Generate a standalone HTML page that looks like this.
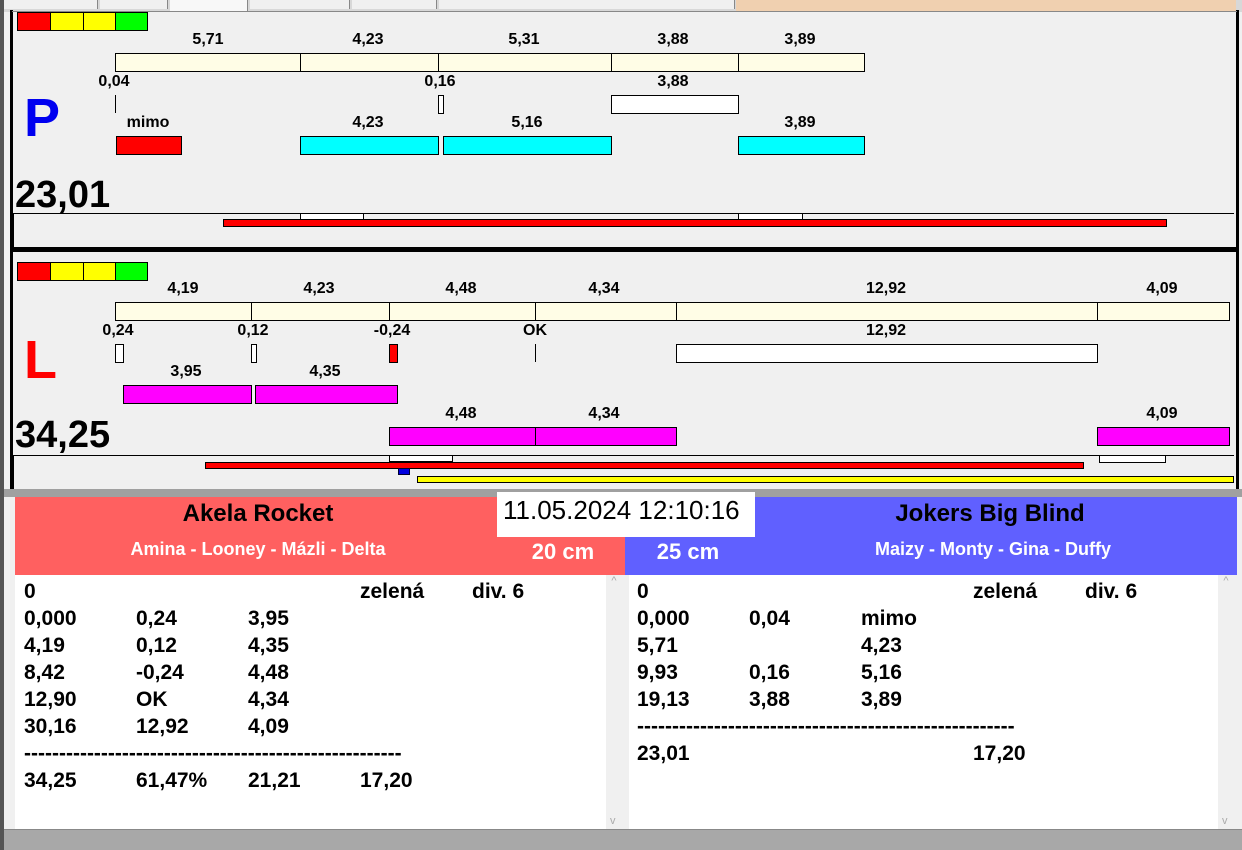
<!DOCTYPE html><html><head><style>
body{margin:0;width:1242px;height:850px;background:#f0f0f0;position:relative;overflow:hidden;font-family:"Liberation Sans",sans-serif}
div{position:absolute;box-sizing:border-box}
.b{border:1px solid #000}
.y{background:#fffde6}.w{background:#fff}.r{background:#f00}.c{background:#0ff}.m{background:#f0f}
.l{font-weight:bold;font-size:16px;transform:translateX(-50%);white-space:nowrap;line-height:18px}
.t{font-weight:bold;font-size:21px;line-height:27px;white-space:nowrap}
</style></head><body>
<div style="left:0;top:0;width:1242px;height:12px;background:#d8d8d8"></div>
<div style="left:0;top:0;width:98px;height:9px;background:#f0f0f0;border-right:1px solid #888"></div>
<div style="left:100px;top:0;width:68px;height:9px;background:#f0f0f0;border-right:1px solid #888"></div>
<div style="left:170px;top:0;width:78px;height:12px;background:#f8f8f8;border-right:1px solid #888"></div>
<div style="left:250px;top:0;width:100px;height:9px;background:#f0f0f0;border-right:1px solid #888"></div>
<div style="left:352px;top:0;width:85px;height:9px;background:#f0f0f0;border-right:1px solid #888"></div>
<div style="left:439px;top:0;width:296px;height:9px;background:#f0f0f0;border-right:1px solid #888"></div>
<div style="left:736px;top:0;width:500px;height:12px;background:#f0d0b0"></div>
<div style="left:0;top:0;width:4px;height:850px;background:#555"></div>
<div style="left:10px;top:10px;width:3px;height:480px;background:#000"></div>
<div style="left:1236px;top:10px;width:3px;height:480px;background:#000"></div>
<div style="left:12px;top:11px;width:1225px;height:1px;background:#888"></div>
<!-- P -->
<div class="b r" style="left:17px;top:12px;width:34px;height:19px"></div>
<div class="b" style="left:50px;top:12px;width:34px;height:19px;background:#ff0"></div>
<div class="b" style="left:83px;top:12px;width:33px;height:19px;background:#ff0"></div>
<div class="b" style="left:115px;top:12px;width:33px;height:19px;background:#0f0"></div>
<div class="l" style="left:208px;top:31px">5,71</div><div class="l" style="left:368px;top:31px">4,23</div><div class="l" style="left:524px;top:31px">5,31</div><div class="l" style="left:673px;top:31px">3,88</div><div class="l" style="left:800px;top:31px">3,89</div>
<div class="b y" style="left:115px;top:53px;width:186px;height:19px"></div>
<div class="b y" style="left:300px;top:53px;width:139px;height:19px"></div>
<div class="b y" style="left:438px;top:53px;width:174px;height:19px"></div>
<div class="b y" style="left:611px;top:53px;width:128px;height:19px"></div>
<div class="b y" style="left:738px;top:53px;width:127px;height:19px"></div>
<div class="l" style="left:114px;top:73px">0,04</div><div class="l" style="left:440px;top:73px">0,16</div><div class="l" style="left:673px;top:73px">3,88</div>
<div style="left:115px;top:95px;width:1px;height:18px;background:#000"></div>
<div class="b w" style="left:438px;top:95px;width:6px;height:19px"></div>
<div class="b w" style="left:611px;top:95px;width:128px;height:19px"></div>
<div style="left:24px;top:88px;font-size:54px;font-weight:bold;color:#0000f0;line-height:60px">P</div>
<div class="l" style="left:148px;top:114px">mimo</div><div class="l" style="left:368px;top:114px">4,23</div><div class="l" style="left:527px;top:114px">5,16</div><div class="l" style="left:800px;top:114px">3,89</div>
<div class="b r" style="left:116px;top:136px;width:66px;height:19px"></div>
<div class="b c" style="left:300px;top:136px;width:139px;height:19px"></div>
<div class="b c" style="left:443px;top:136px;width:169px;height:19px"></div>
<div class="b c" style="left:738px;top:136px;width:127px;height:19px"></div>
<div style="left:15px;top:174px;font-size:38px;font-weight:bold;line-height:42px">23,01</div>
<div class="b" style="left:13px;top:213px;width:1221px;height:36px;border-bottom:none;border-right:none"></div>
<div class="b w" style="left:300px;top:213px;width:64px;height:7px"></div>
<div class="b w" style="left:738px;top:213px;width:65px;height:7px"></div>
<div class="b r" style="left:223px;top:219px;width:944px;height:8px"></div>
<div style="left:10px;top:247px;width:1229px;height:5px;background:#000"></div>
<!-- L -->
<div class="b r" style="left:17px;top:262px;width:34px;height:19px"></div>
<div class="b" style="left:50px;top:262px;width:34px;height:19px;background:#ff0"></div>
<div class="b" style="left:83px;top:262px;width:33px;height:19px;background:#ff0"></div>
<div class="b" style="left:115px;top:262px;width:33px;height:19px;background:#0f0"></div>
<div class="l" style="left:183px;top:280px">4,19</div><div class="l" style="left:319px;top:280px">4,23</div><div class="l" style="left:461px;top:280px">4,48</div><div class="l" style="left:604px;top:280px">4,34</div><div class="l" style="left:886px;top:280px">12,92</div><div class="l" style="left:1162px;top:280px">4,09</div>
<div class="b y" style="left:115px;top:302px;width:137px;height:19px"></div>
<div class="b y" style="left:251px;top:302px;width:139px;height:19px"></div>
<div class="b y" style="left:389px;top:302px;width:147px;height:19px"></div>
<div class="b y" style="left:535px;top:302px;width:142px;height:19px"></div>
<div class="b y" style="left:676px;top:302px;width:422px;height:19px"></div>
<div class="b y" style="left:1097px;top:302px;width:133px;height:19px"></div>
<div class="l" style="left:118px;top:322px">0,24</div><div class="l" style="left:253px;top:322px">0,12</div><div class="l" style="left:392px;top:322px">-0,24</div><div class="l" style="left:535px;top:322px">OK</div><div class="l" style="left:886px;top:322px">12,92</div>
<div class="b w" style="left:115px;top:344px;width:9px;height:19px"></div>
<div class="b w" style="left:251px;top:344px;width:6px;height:19px"></div>
<div class="b r" style="left:389px;top:344px;width:9px;height:19px"></div>
<div style="left:535px;top:344px;width:1px;height:18px;background:#000"></div>
<div class="b w" style="left:676px;top:344px;width:422px;height:19px"></div>
<div style="left:24px;top:330px;font-size:54px;font-weight:bold;color:#f00;line-height:60px">L</div>
<div class="l" style="left:186px;top:363px">3,95</div><div class="l" style="left:325px;top:363px">4,35</div>
<div class="b m" style="left:123px;top:385px;width:129px;height:19px"></div>
<div class="b m" style="left:255px;top:385px;width:143px;height:19px"></div>
<div class="l" style="left:461px;top:405px">4,48</div><div class="l" style="left:604px;top:405px">4,34</div><div class="l" style="left:1162px;top:405px">4,09</div>
<div class="b m" style="left:389px;top:427px;width:147px;height:19px"></div>
<div class="b m" style="left:535px;top:427px;width:142px;height:19px"></div>
<div class="b m" style="left:1097px;top:427px;width:133px;height:19px"></div>
<div style="left:15px;top:414px;font-size:38px;font-weight:bold;line-height:42px">34,25</div>
<div class="b" style="left:13px;top:455px;width:1221px;height:36px;border-bottom:none;border-right:none"></div>
<div class="b w" style="left:389px;top:455px;width:64px;height:7px"></div>
<div class="b w" style="left:1099px;top:455px;width:67px;height:8px"></div>
<div class="b r" style="left:205px;top:462px;width:879px;height:7px"></div>
<div style="left:398px;top:468px;width:12px;height:7px;background:#0000e0;border:1px solid #003"></div>
<div class="b" style="left:417px;top:476px;width:817px;height:7px;background:#ff0"></div>
<div style="left:4px;top:489px;width:1238px;height:8px;background:#a0a0a0"></div>
<!-- bottom -->
<div style="left:15px;top:497px;width:610px;height:78px;background:#ff6060"></div>
<div style="left:625px;top:497px;width:612px;height:78px;background:#6060ff"></div>
<div style="left:497px;top:492px;width:258px;height:45px;background:#fff"></div>
<div style="left:503px;top:494px;font-size:26px;line-height:32px">11.05.2024 12:10:16</div>
<div class="l" style="left:258px;top:500px;font-size:24px;line-height:28px">Akela Rocket</div>
<div class="l" style="left:990px;top:500px;font-size:24px;line-height:28px">Jokers Big Blind</div>
<div class="l" style="left:258px;top:539px;color:#fff;font-size:18px;line-height:20px">Amina - Looney - Mázli - Delta</div>
<div class="l" style="left:993px;top:539px;color:#fff;font-size:18px;line-height:20px">Maizy - Monty - Gina - Duffy</div>
<div class="l" style="left:563px;top:539px;color:#fff;font-size:22px;line-height:26px">20 cm</div>
<div class="l" style="left:688px;top:539px;color:#fff;font-size:22px;line-height:26px">25 cm</div>
<div style="left:15px;top:575px;width:591px;height:254px;background:#fff"></div>
<div style="left:606px;top:575px;width:16px;height:254px;background:#f0f0f0;color:#aaa;font-size:11px;text-align:center">^<div style="position:absolute;bottom:2px;left:4px">v</div></div>
<div style="left:629px;top:575px;width:589px;height:254px;background:#fff"></div>
<div style="left:1218px;top:575px;width:16px;height:254px;background:#f0f0f0;color:#aaa;font-size:11px;text-align:center">^<div style="position:absolute;bottom:2px;left:4px">v</div></div>
<div style="left:4px;top:829px;width:1238px;height:21px;background:#a8a8a8;border-top:1px solid #888"></div>
<div class="t" style="left:24px;top:578px">0<br>0,000<br>4,19<br>8,42<br>12,90<br>30,16<br>------------------------------------------------------<br>34,25</div>
<div class="t" style="left:136px;top:605px">0,24<br>0,12<br>-0,24<br>OK<br>12,92<br><br>61,47%</div>
<div class="t" style="left:248px;top:605px">3,95<br>4,35<br>4,48<br>4,34<br>4,09<br><br>21,21</div>
<div class="t" style="left:360px;top:578px">zelená<br><br><br><br><br><br><br>17,20</div>
<div class="t" style="left:472px;top:578px">div. 6</div>
<div class="t" style="left:637px;top:578px">0<br>0,000<br>5,71<br>9,93<br>19,13<br>------------------------------------------------------<br>23,01</div>
<div class="t" style="left:749px;top:605px">0,04<br><br>0,16<br>3,88</div>
<div class="t" style="left:861px;top:605px">mimo<br>4,23<br>5,16<br>3,89</div>
<div class="t" style="left:973px;top:578px">zelená<br><br><br><br><br><br>17,20</div>
<div class="t" style="left:1085px;top:578px">div. 6</div>
</body></html>
